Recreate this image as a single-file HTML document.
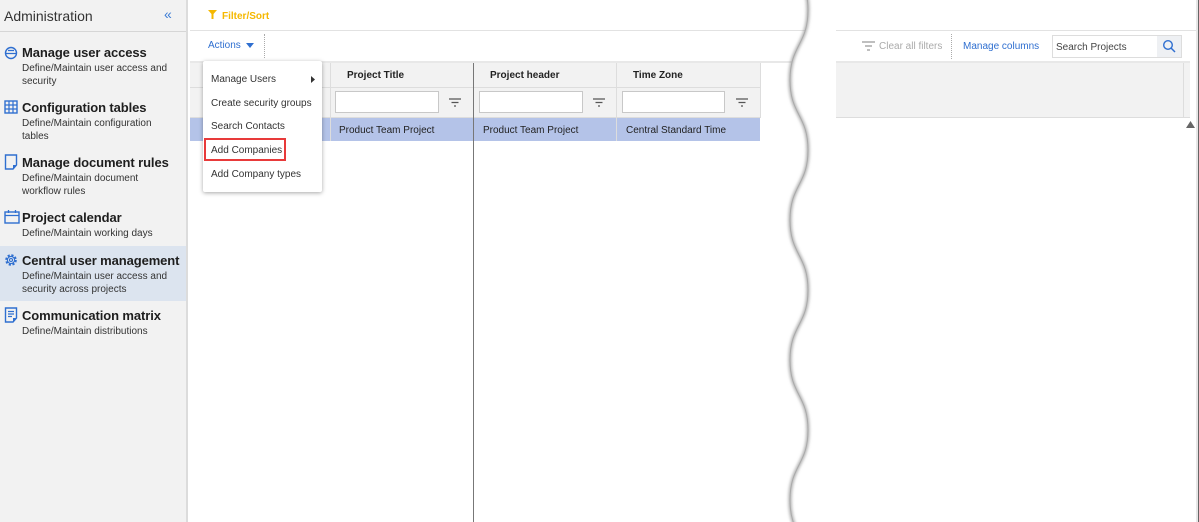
<!DOCTYPE html>
<html><head><meta charset="utf-8"><style>
*{margin:0;padding:0;box-sizing:border-box}
html,body{width:1199px;height:522px;overflow:hidden}
body{background:#fff;font-family:"Liberation Sans",Arial,sans-serif;position:relative;color:#222}
.abs{position:absolute}
#side{left:0;top:0;width:188px;height:522px;background:#f2f2f2;border-right:2px solid #dcdcdc}
.item{position:absolute;left:0;width:186px}
.item .t{position:absolute;left:22px;font-size:13px;font-weight:bold;color:#1e1e1e;letter-spacing:-0.1px;white-space:nowrap}
.item .d{position:absolute;left:22px;font-size:10px;color:#333;line-height:13px;width:148px}
.item svg{position:absolute;left:4px}
.txt{font-size:10px;color:#222}
.col{position:absolute;font-size:10px;font-weight:bold;color:#222}
.inp{position:absolute;height:22px;border:1px solid #c8c8c8;background:#fff}
.menu div{position:absolute;left:8px;font-size:10px;color:#333}
</style></head><body>
<div id="side" class="abs">
  <div class="abs" style="left:4px;top:8px;font-size:14px;color:#333">Administration</div>
  <div class="abs" style="left:164px;top:6px;font-size:14px;color:#3a7bd5">«</div>
  <div class="abs" style="left:0;top:31px;width:186px;height:1px;background:#d6d6d6"></div>

  <div class="item" style="top:44px">
    <svg width="14" height="14" viewBox="0 0 14 14" style="top:2px"><circle cx="7" cy="7" r="5.5" fill="none" stroke="#2f6fd0" stroke-width="1.4"/><path d="M1.5 7.5h11M4 4.5h6" stroke="#2f6fd0" stroke-width="1.3"/></svg>
    <div class="t" style="top:1px">Manage user access</div>
    <div class="d" style="top:18px">Define/Maintain user access and security</div>
  </div>
  <div class="item" style="top:99px">
    <svg width="14" height="14" viewBox="0 0 14 14" style="top:1px"><rect x="1" y="1" width="12" height="12" fill="none" stroke="#2f6fd0" stroke-width="1.4"/><path d="M5 1v12M9 1v12M1 5h12M1 9h12" stroke="#2f6fd0" stroke-width="1.2"/></svg>
    <div class="t" style="top:1px">Configuration tables</div>
    <div class="d" style="top:18px">Define/Maintain configuration tables</div>
  </div>
  <div class="item" style="top:154px">
    <svg width="14" height="16" viewBox="0 0 14 16" style="top:0"><path d="M1.5 1h11v10l-3.5 4h-7.5z" fill="none" stroke="#2f6fd0" stroke-width="1.4"/><path d="M9 15l3.5-4H9z" fill="#2f6fd0"/></svg>
    <div class="t" style="top:1px">Manage document rules</div>
    <div class="d" style="top:18px">Define/Maintain document workflow rules</div>
  </div>
  <div class="item" style="top:209px">
    <svg width="16" height="14" viewBox="0 0 16 14" style="top:1px"><rect x="1" y="2" width="14" height="11" fill="none" stroke="#2f6fd0" stroke-width="1.4"/><path d="M1 5.5h14M4.5 0v3M11.5 0v3" stroke="#2f6fd0" stroke-width="1.3"/></svg>
    <div class="t" style="top:1px">Project calendar</div>
    <div class="d" style="top:18px">Define/Maintain working days</div>
  </div>
  <div class="abs" style="left:0;top:246px;width:186px;height:55px;background:#dce4ef"></div>
  <div class="item" style="top:252px">
    <svg width="14" height="14" viewBox="0 0 14 14" style="top:1px"><circle cx="7" cy="7" r="4.8" fill="none" stroke="#2f6fd0" stroke-width="2" stroke-dasharray="2.2 1.6"/><circle cx="7" cy="7" r="3.6" fill="none" stroke="#2f6fd0" stroke-width="1.1"/><circle cx="7" cy="7" r="1.5" fill="none" stroke="#2f6fd0" stroke-width="1.1"/></svg>
    <div class="t" style="top:1px">Central user management</div>
    <div class="d" style="top:18px">Define/Maintain user access and security across projects</div>
  </div>
  <div class="item" style="top:307px">
    <svg width="14" height="16" viewBox="0 0 14 16" style="top:0"><path d="M1.5 1h11v10l-3.5 4h-7.5z" fill="none" stroke="#2f6fd0" stroke-width="1.4"/><path d="M4 4.5h6M4 7h6M4 9.5h4" stroke="#2f6fd0" stroke-width="1.2"/><path d="M9 15l3.5-4H9z" fill="#2f6fd0"/></svg>
    <div class="t" style="top:1px">Communication matrix</div>
    <div class="d" style="top:18px">Define/Maintain distributions</div>
  </div>
</div>

<svg class="abs" style="left:208px;top:10px" width="9" height="9" viewBox="0 0 9 9"><path d="M0 0h9L5.5 4v5h-2V4z" fill="#f5b800"/></svg>
<div class="abs" style="left:222px;top:11px;font-size:10px;font-weight:bold;color:#f5b800">Filter/Sort</div>
<div class="abs" style="left:190px;top:30px;width:1006px;height:1px;background:#e2e2e2"></div>
<div class="abs" style="left:208px;top:40px;font-size:10px;color:#2f6fd0">Actions</div>
<svg class="abs" style="left:246px;top:43px" width="8" height="5"><path d="M0 0h8L4 5z" fill="#2f6fd0"/></svg>
<div class="abs" style="left:264px;top:34px;height:24px;border-left:1px dotted #aaa"></div>
<div class="abs" style="left:190px;top:61px;width:1000px;height:2px;background:#e8e8e8"></div>

<div class="abs" style="left:190px;top:63px;width:570px;height:25px;background:#f2f2f2;border-bottom:1px solid #ddd"></div>
<div class="abs" style="left:190px;top:88px;width:570px;height:30px;background:#f2f2f2;border-bottom:1px solid #ddd"></div>
<div class="abs" style="left:190px;top:118px;width:570px;height:23px;background:#b4c3e8"></div>
<div class="abs" style="left:330px;top:63px;width:1px;height:78px;background:#ddd"></div>
<div class="abs" style="left:616px;top:63px;width:1px;height:78px;background:#ddd"></div>
<div class="abs" style="left:760px;top:63px;width:1px;height:55px;background:#ddd"></div>
<div class="abs" style="left:473px;top:63px;width:1px;height:459px;background:#777"></div>
<div class="col" style="left:347px;top:70px">Project Title</div>
<div class="col" style="left:490px;top:70px">Project header</div>
<div class="col" style="left:633px;top:70px">Time Zone</div>
<div class="inp" style="left:335px;top:91px;width:104px"></div>
<div class="inp" style="left:479px;top:91px;width:104px"></div>
<div class="inp" style="left:622px;top:91px;width:103px"></div>
<svg class="abs" style="left:449px;top:98px" width="12" height="9"><path d="M0 1h12M2.5 4.5h7M5 8h2" stroke="#555" stroke-width="1.3"/></svg>
<svg class="abs" style="left:593px;top:98px" width="12" height="9"><path d="M0 1h12M2.5 4.5h7M5 8h2" stroke="#555" stroke-width="1.3"/></svg>
<svg class="abs" style="left:736px;top:98px" width="12" height="9"><path d="M0 1h12M2.5 4.5h7M5 8h2" stroke="#555" stroke-width="1.3"/></svg>
<div class="txt abs" style="left:339px;top:125px">Product Team Project</div>
<div class="txt abs" style="left:483px;top:125px">Product Team Project</div>
<div class="txt abs" style="left:626px;top:125px">Central Standard Time</div>

<div class="abs" style="left:830px;top:63px;width:360px;height:55px;background:#f2f2f2;border-bottom:1px solid #ddd"></div>
<div class="abs" style="left:1183px;top:63px;width:1px;height:55px;background:#ddd"></div>
<svg class="abs" style="left:862px;top:41px" width="13" height="10"><path d="M0 1h13M3 5h7M5 9h3" stroke="#999" stroke-width="1.2"/></svg>
<div class="abs" style="left:879px;top:41px;font-size:10px;color:#aaa">Clear all filters</div>
<div class="abs" style="left:951px;top:34px;height:25px;border-left:1px dotted #aaa"></div>
<div class="abs" style="left:963px;top:41px;font-size:10px;color:#2f6fd0">Manage columns</div>
<div class="abs" style="left:1052px;top:35px;width:130px;height:23px;border:1px solid #ddd;background:#fff"></div>
<div class="abs" style="left:1157px;top:36px;width:24px;height:21px;background:#eef0f3"></div>
<div class="abs" style="left:1056px;top:42px;font-size:10px;color:#444">Search Projects</div>
<svg class="abs" style="left:1162px;top:39px" width="14" height="14"><circle cx="6" cy="6" r="4.3" fill="none" stroke="#2f6fd0" stroke-width="1.4"/><path d="M9 9l4 4" stroke="#2f6fd0" stroke-width="1.5"/></svg>
<div class="abs" style="left:1196px;top:0;width:3px;height:522px;background:#e6e6e6"></div>
<div class="abs" style="left:1198px;top:0;width:1px;height:522px;background:#666"></div>
<svg class="abs" style="left:1186px;top:121px" width="9" height="7"><path d="M0 7L4.5 0 9 7z" fill="#666"/></svg>

<svg class="abs" style="left:0;top:0" width="1199" height="522">
<defs><filter id="b" x="-50%" y="-5%" width="200%" height="110%"><feGaussianBlur stdDeviation="1.6"/></filter></defs>
<path d="M808,-130 C808,-95 790,-95 790,-60 C790,-25 808,-25 808,10 C808,45 790,45 790,80 C790,115 808,115 808,150 C808,185 790,185 790,220 C790,255 808,255 808,290 C808,325 790,325 790,360 C790,395 808,395 808,430 C808,465 790,465 790,500 C790,535 808,535 808,570 L836,570 L836,-130 Z" fill="#fff"/>
<path d="M808,-130 C808,-95 790,-95 790,-60 C790,-25 808,-25 808,10 C808,45 790,45 790,80 C790,115 808,115 808,150 C808,185 790,185 790,220 C790,255 808,255 808,290 C808,325 790,325 790,360 C790,395 808,395 808,430 C808,465 790,465 790,500 C790,535 808,535 808,570" fill="none" stroke="#888" stroke-width="2.2" filter="url(#b)"/>
<path d="M808,-130 C808,-95 790,-95 790,-60 C790,-25 808,-25 808,10 C808,45 790,45 790,80 C790,115 808,115 808,150 C808,185 790,185 790,220 C790,255 808,255 808,290 C808,325 790,325 790,360 C790,395 808,395 808,430 C808,465 790,465 790,500 C790,535 808,535 808,570" fill="none" stroke="#aaa" stroke-width="1"/>
</svg>

<div class="abs menu" style="left:203px;top:61px;width:119px;height:131px;background:#fff;box-shadow:0 1px 4px rgba(0,0,0,.35);border-radius:2px">
  <div style="top:13px">Manage Users</div>
  <svg class="abs" style="left:108px;top:15px" width="4" height="7"><path d="M0 0l4 3.5L0 7z" fill="#333"/></svg>
  <div style="top:37px">Create security groups</div>
  <div style="top:60px">Search Contacts</div>
  <div style="top:84px">Add Companies</div>
  <div style="top:108px">Add Company types</div>
  <span class="abs" style="left:1px;top:77px;width:82px;height:23px;border:2px solid #e83a3a"></span>
</div>
</body></html>
